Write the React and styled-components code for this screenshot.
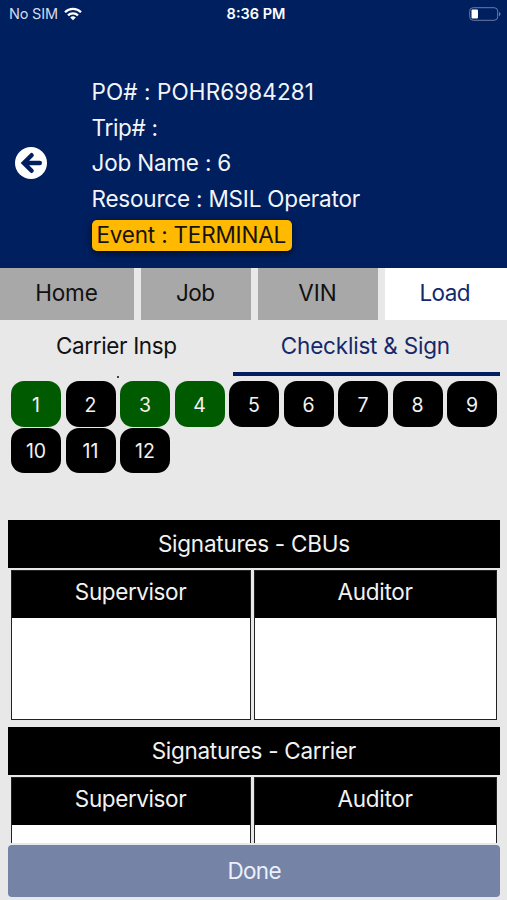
import React from "react";
import styled, { createGlobalStyle } from "styled-components";

const navy = "#001f5f";

const GlobalStyle = createGlobalStyle`
  * { box-sizing: border-box; }
  body { margin: 0; background: #e8e8e8; }
`;

const Screen = styled.div`
  width: 507px;
  height: 900px;
  overflow: hidden;
  display: flex;
  flex-direction: column;
  background: #e8e8e8;
  font-family: Inter, "Liberation Sans", sans-serif;
  font-size: 22.5px;
  color: #111;
`;

const Label = styled.span`
  white-space: pre;
  letter-spacing: ${(p) => p.$track || 0}px;
  margin-right: ${(p) => -(p.$track || 0)}px;
`;

const Header = styled.header`
  flex: none;
  height: 268px;
  background: ${navy};
  color: #f3f5fa;
`;

const StatusBar = styled.div`
  height: 27px;
  display: grid;
  grid-template-columns: 1fr auto 1fr;
  align-items: center;
  padding: 0 6px 0 9px;
  font-size: 14.5px;
`;

const Carrier = styled.div`
  display: flex;
  align-items: center;
  gap: 6px;
  color: #d5dbea;
`;

const Clock = styled.div`
  font-weight: 600;
  padding-left: 2px;
  color: #fff;
`;

const Battery = styled.svg`
  justify-self: end;
`;

const JobSummary = styled.div`
  display: flex;
  padding-top: 47px;
`;

const BackButton = styled.button`
  width: 91.5px;
  height: 178px;
  padding: 0 0 0 15px;
  border: 0;
  background: none;
  display: flex;
  align-items: center;
`;

const Details = styled.div`
  display: flex;
  flex-direction: column;
  align-items: flex-start;
`;

const Detail = styled.div`
  height: 35.5px;
  line-height: 35.5px;
`;

const EventBadge = styled.div`
  width: 200px;
  height: 31px;
  margin-top: 3.5px;
  line-height: 30px;
  padding-left: 5px;
  border-radius: 5px;
  background: #ffb900;
  color: #17130a;
  box-shadow: 0 2px 7px rgba(0, 0, 0, 0.65);
`;

const Tabs = styled.nav`
  flex: none;
  height: 52px;
  display: grid;
  grid-template-columns: 134px 110px 120px 122px;
  column-gap: 7px;
`;

const Tab = styled.div`
  display: flex;
  justify-content: center;
  line-height: 49px;
  background: ${(p) => (p.$active ? "#fff" : "#a8a8a8")};
  color: ${(p) => (p.$active ? "#14296b" : "#111")};
  padding-right: ${(p) => (p.$active ? 2 : 1)}px;
`;

const SubTabs = styled.nav`
  flex: none;
  height: 61px;
  display: grid;
  grid-template-columns: 225px 267px;
  padding: 0 7px 0 8px;
`;

const SubTab = styled.div`
  height: 56px;
  display: flex;
  flex-direction: column;
  align-items: center;
  line-height: 52px;
  margin-left: ${(p) => (p.$active ? 0 : -8)}px;
  padding-right: ${(p) => (p.$active ? 2 : 0)}px;
  color: ${(p) => (p.$active ? "#14296b" : "#111")};
  border-bottom: ${(p) => (p.$active ? `4px solid ${navy}` : "0")};
`;

const Dot = styled.i`
  flex: none;
  width: 2px;
  height: 2px;
  margin: 4px 0 0 3px;
  background: #444;
`;

const Checklist = styled.div`
  flex: none;
  height: 139px;
  display: grid;
  grid-template-columns: repeat(9, 50px);
  grid-auto-rows: 45.5px;
  align-content: start;
  gap: 1px 4.5px;
  padding-left: 11px;
`;

const Step = styled.button`
  display: flex;
  align-items: center;
  justify-content: center;
  padding: 2px 0 0;
  border: 0;
  border-radius: 13px;
  background: ${(p) => (p.$done ? "#005a00" : "#000")};
  color: #f2f2f2;
  font: 400 19.5px Inter, "Liberation Sans", sans-serif;
`;

const Signatures = styled.main`
  flex: none;
  height: 323px;
  overflow: hidden;
  padding: 0 7px 0 8px;
`;

const SectionTitle = styled.h2`
  height: 48px;
  margin: 0 0 2px;
  display: flex;
  justify-content: center;
  line-height: 48px;
  font-size: 22.5px;
  font-weight: 400;
  background: #000;
  color: #f2f2f2;
`;

const SignRow = styled.div`
  display: grid;
  grid-template-columns: 240.5px 243.5px;
  column-gap: 2.5px;
  margin: 0 2.5px 7px 2.5px;
`;

const SignCard = styled.div`
  height: 150px;
  border: 1.5px solid #222;
  background: #fff;
`;

const SignHead = styled.div`
  height: 47px;
  display: flex;
  justify-content: center;
  line-height: 41px;
  background: #000;
  color: #f2f2f2;
`;

const DoneButton = styled.button`
  flex: none;
  width: 492px;
  height: 52px;
  margin: 1.5px 0 0 8px;
  padding: 0 0 1px 1px;
  border: 0;
  border-radius: 4px;
  background: #7583a6;
  color: #eaf1fb;
  font: 400 22.5px Inter, "Liberation Sans", sans-serif;
`;

const WifiIcon = () => (
  <svg width="18" height="14" viewBox="0 0 18 14" fill="none" stroke="#fff" strokeWidth="2.3">
    <path d="M1 5.2a11.4 11.4 0 0 1 16 0" />
    <path d="M4 8.4a7.1 7.1 0 0 1 10 0" />
    <path d="M9 13.2 6.2 10.5a4 4 0 0 1 5.6 0Z" fill="#fff" stroke="none" />
  </svg>
);

const BackIcon = () => (
  <svg width="32" height="32" viewBox="0 0 32 32">
    <circle cx="16" cy="16" r="16" fill="#fff" />
    <path
      d="M16.6 8.2 8.8 16l7.8 7.8M9.5 16h15.3"
      fill="none"
      stroke={navy}
      strokeWidth="4.4"
      strokeLinecap="round"
    />
  </svg>
);

const sections = [
  { title: "Signatures - CBUs", track: -0.25 },
  { title: "Signatures - Carrier", track: -0.29 },
];
const roles = [
  { name: "Supervisor", track: -0.4 },
  { name: "Auditor", track: -0.3 },
];
const doneSteps = [1, 3, 4];

export default function App() {
  return (
    <Screen>
      <GlobalStyle />
      <Header>
        <StatusBar>
          <Carrier>
            <Label $track={-0.2}>No SIM</Label>
            <WifiIcon />
          </Carrier>
          <Clock><Label>8:36 PM</Label></Clock>
          <Battery width="32" height="14" viewBox="0 0 32 14">
            <rect x="0.7" y="0.7" width="28" height="12.6" rx="3.5" fill="none" stroke="#6b7ba3" />
            <rect x="2.5" y="2.6" width="6.5" height="8.8" rx="1" fill="#fff" />
            <path d="M30 5v4.2q1.5-.6 1.5-2.1T30 5Z" fill="#6b7ba3" />
          </Battery>
        </StatusBar>
        <JobSummary>
          <BackButton aria-label="Back"><BackIcon /></BackButton>
          <Details>
            <Detail><Label $track={0.1}>PO# : POHR6984281</Label></Detail>
            <Detail><Label $track={-0.3}>Trip# :</Label></Detail>
            <Detail><Label $track={-0.2}>Job Name : 6</Label></Detail>
            <Detail><Label $track={-0.2}>Resource : MSIL Operator</Label></Detail>
            <EventBadge><Label $track={-0.2}>Event : TERMINAL</Label></EventBadge>
          </Details>
        </JobSummary>
      </Header>
      <Tabs>
        <Tab><Label $track={-0.15}>Home</Label></Tab>
        <Tab><Label $track={-0.6}>Job</Label></Tab>
        <Tab><Label>VIN</Label></Tab>
        <Tab $active><Label $track={-0.6}>Load</Label></Tab>
      </Tabs>
      <SubTabs>
        <SubTab><Label $track={-0.35}>Carrier Insp</Label><Dot /></SubTab>
        <SubTab $active><Label $track={-0.2}>Checklist &amp; Sign</Label></SubTab>
      </SubTabs>
      <Checklist>
        {Array.from({ length: 12 }, (_, i) => i + 1).map((n) => (
          <Step key={n} $done={doneSteps.includes(n)}>{n}</Step>
        ))}
      </Checklist>
      <Signatures>
        {sections.map((s) => (
          <section key={s.title}>
            <SectionTitle><Label $track={s.track}>{s.title}</Label></SectionTitle>
            <SignRow>
              {roles.map((role) => (
                <SignCard key={role.name}>
                  <SignHead><Label $track={role.track}>{role.name}</Label></SignHead>
                </SignCard>
              ))}
            </SignRow>
          </section>
        ))}
      </Signatures>
      <DoneButton><Label $track={-0.7}>Done</Label></DoneButton>
    </Screen>
  );
}
